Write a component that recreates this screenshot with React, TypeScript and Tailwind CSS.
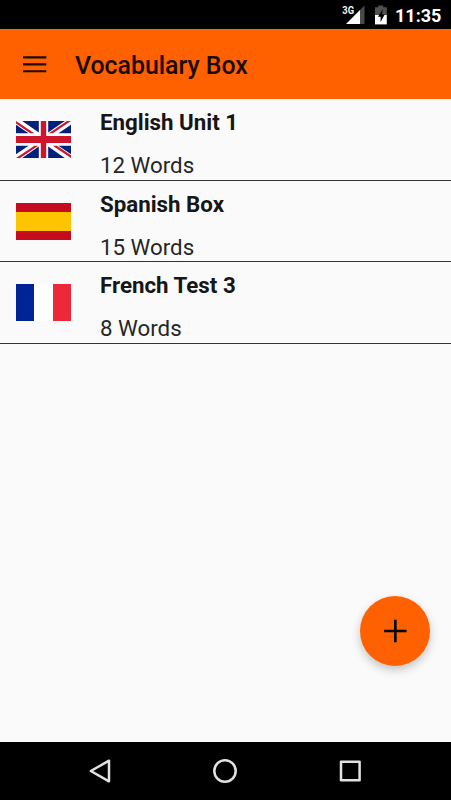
import React from "react";

function UkFlag() {
  return (
    <svg width="55" height="37" viewBox="0 0 55 37" className="block">
      <rect width="55" height="37" fill="#fff" />
      <g fill="#00207e">
        <path d="M6.2 0H22.8V11.4Z" />
        <path d="M32.2 0H48.8L32.2 11.4Z" />
        <path d="M0 3.8V12.3H12.6Z" />
        <path d="M55 3.8V12.3H42.4Z" />
        <path d="M0 33.2V24.7H12.6Z" />
        <path d="M55 33.2V24.7H42.4Z" />
        <path d="M6.2 37H22.8V25.6Z" />
        <path d="M32.2 37H48.8L32.2 25.6Z" />
      </g>
      <g fill="#d0142c">
        <path d="M0 0L18.3 12.3H14.2L0 2.6Z" />
        <path d="M55 0H51L32.8 12.3H36.8Z" />
        <path d="M0 37L18.3 24.7H22.3L4 37Z" />
        <path d="M55 37L36.8 24.7H40.9L55 34.3Z" />
        <path d="M24.8 0h5.4v37h-5.4zM0 15h55v7H0z" />
      </g>
    </svg>
  );
}

function SpainFlag() {
  return (
    <div className="flex h-[37px] w-[55px] flex-col">
      <div className="h-[9px] bg-[#c60b1e]" />
      <div className="flex-1 bg-[#ffc400]" />
      <div className="h-[9px] bg-[#c60b1e]" />
    </div>
  );
}

function FranceFlag() {
  return (
    <div className="grid h-[37px] w-[55px] grid-cols-3">
      <div className="bg-[#002395]" />
      <div className="bg-white" />
      <div className="bg-[#ed2939]" />
    </div>
  );
}

const boxes = [
  { title: "English Unit 1", count: "12 Words", flag: <UkFlag /> },
  { title: "Spanish Box", count: "15 Words", flag: <SpainFlag /> },
  { title: "French Test 3", count: "8 Words", flag: <FranceFlag /> },
];

export default function App() {
  return (
    <div className="relative flex h-[800px] w-[451px] flex-col overflow-hidden bg-[#fafafa] font-['Roboto',sans-serif]">
      <div className="flex h-[29.4px] shrink-0 items-center justify-end bg-black pr-[10px] text-white">
        <svg width="60" height="29" viewBox="0 0 60 29" className="shrink-0">
          <path d="M29.5 5.5V24H25V10Z" fill="#4a4a4a" />
          <path d="M25 10V24H11Z" fill="#fff" />
          <text x="7.3" y="14" fontSize="11" fontWeight="700" fill="#f2f2f2" textLength="11.8" lengthAdjust="spacingAndGlyphs" stroke="#000" strokeWidth="1.5" paintOrder="stroke">3G</text>
          <path d="M40 7.3H43.3V5.5H48.2V7.3H51.8V15H40Z" fill="#505050" />
          <path d="M40 15H51.8V24.4H40Z" fill="#fff" />
          <path d="M47.8 9L42.9 16.8H45.6V22L49.7 14.5H47Z" fill="#000" />
        </svg>
        <span className="w-[46px] pt-[2px] text-[18px] leading-none font-bold whitespace-nowrap">11:35</span>
      </div>
      <header className="flex h-[70px] shrink-0 items-center bg-[#ff6000] pl-[23px] text-black">
        <svg width="24" height="18" viewBox="0 0 24 18" className="shrink-0">
          <path d="M0 2.4H23.3M0 9.4H23.3M0 16.2H23.3" stroke="#1a0a00" strokeWidth="2.1" />
        </svg>
        <h1 className="ml-[28px] pt-[5px] text-[24.85px] leading-none font-medium text-[#1a0a00]">Vocabulary Box</h1>
      </header>
      <main className="flex-1">
        {boxes.map((box) => (
          <div key={box.title} className="flex h-[81.4px] border-b border-[#333] pl-4">
            <div className="mt-[22px] shrink-0">{box.flag}</div>
            <div className="ml-[29px] flex flex-col pt-[9px] text-[#161616]">
              <span className="text-[22.3px] leading-[28px] font-bold">{box.title}</span>
              <span className="mt-[15px] text-[22.3px] leading-[28px] text-[#262626]">{box.count}</span>
            </div>
          </div>
        ))}
      </main>
      <button className="absolute top-[596px] left-[360px] flex size-[70px] items-center justify-center rounded-full bg-[#ff6000] shadow-[0_4px_10px_rgba(0,0,0,0.22)]">
        <svg width="24" height="24" viewBox="0 0 24 24">
          <path d="M12.3 0.7V23.3M1 12H23.6" stroke="#000" strokeWidth="2.7" />
        </svg>
      </button>
      <nav className="flex h-[57.6px] shrink-0 items-center justify-between bg-black pr-[88px] pl-[87px]">
        <svg width="24" height="28" viewBox="0 0 24 28" fill="none" stroke="#e2e2e2" strokeWidth="2.5" strokeLinejoin="round">
          <path d="M3.8 14L22 3.7V24.3Z" />
        </svg>
        <svg width="26" height="26" viewBox="0 0 26 26" fill="none" stroke="#e2e2e2" strokeWidth="2.5">
          <circle cx="13" cy="13" r="10.7" />
        </svg>
        <svg width="24" height="24" viewBox="0 0 24 24" fill="none" stroke="#e2e2e2" strokeWidth="2.5" strokeLinejoin="round">
          <rect x="2" y="2.7" width="18.6" height="18.6" />
        </svg>
      </nav>
    </div>
  );
}
